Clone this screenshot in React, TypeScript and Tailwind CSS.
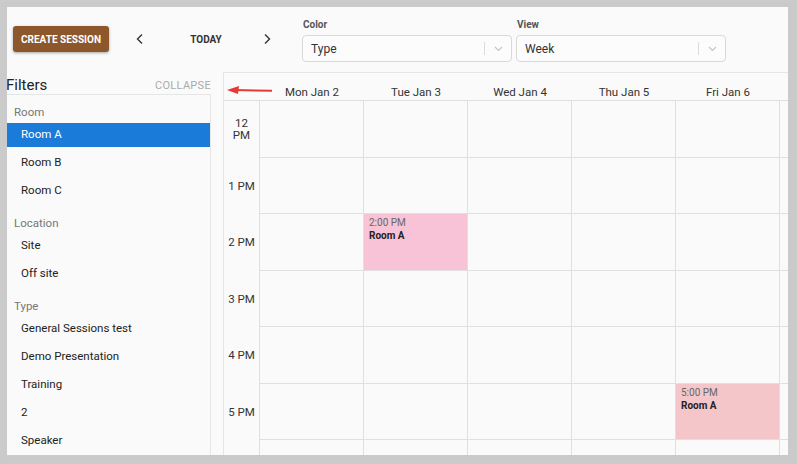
import React from "react";

const font = { fontFamily: "Roboto, 'Liberation Sans', Arial, sans-serif" };

function Chevron({ dir }: { dir: "left" | "right" }) {
  return (
    <svg width="10" height="12" viewBox="0 0 10 12" fill="none">
      {dir === "left" ? (
        <path d="M7 1.5 L2.5 6 L7 10.5" stroke="#333" strokeWidth="1.4" />
      ) : (
        <path d="M3 1.5 L7.5 6 L3 10.5" stroke="#333" strokeWidth="1.4" />
      )}
    </svg>
  );
}

function Select({ label, value }: { label: string; value: string }) {
  return (
    <div className="flex flex-col w-[210px]">
      <div className="text-[10px] font-bold text-[#555] h-[14px] leading-[14px] pl-[1px]">{label}</div>
      <div className="mt-[3px] h-[27px] border border-[#d9d9d9] rounded-[4px] bg-[#fcfcfc] flex items-center">
        <div className="flex-1 pl-[8px] text-[12px] text-[#333]">{value}</div>
        <div className="w-px h-[13px] bg-[#dcdcdc]" />
        <div className="w-[26px] flex justify-center">
          <svg width="9" height="6" viewBox="0 0 9 6" fill="none">
            <path d="M1 1 L4.5 4.5 L8 1" stroke="#c4c4c4" strokeWidth="1.1" />
          </svg>
        </div>
      </div>
    </div>
  );
}

const sections = [
  { title: "Room", items: ["Room A", "Room B", "Room C"] },
  { title: "Location", items: ["Site", "Off site"] },
  { title: "Type", items: ["General Sessions test", "Demo Presentation", "Training", "2", "Speaker"] },
];

const days = ["Mon Jan 2", "Tue Jan 3", "Wed Jan 4", "Thu Jan 5", "Fri Jan 6"];
const hours = ["12\nPM", "1 PM", "2 PM", "3 PM", "4 PM", "5 PM"];

function Cell({ day, hour }: { day: number; hour: number }) {
  let ev: null | { time: string; bg: string } = null;
  if (day === 1 && hour === 2) ev = { time: "2:00 PM", bg: "bg-[#f8c3d6]" };
  if (day === 4 && hour === 5) ev = { time: "5:00 PM", bg: "bg-[#f4c6c9]" };
  return (
    <div className="h-[56.5px] border-r border-b border-[#e0e0e0] relative">
      {ev && (
        <div className={`absolute inset-0 ${ev.bg} px-[5px] pt-[3px]`}>
          <div className="text-[10px] leading-[12px] text-[#666]">{ev.time}</div>
          <div className="text-[10px] leading-[13px] font-bold text-[#222]">Room A</div>
        </div>
      )}
    </div>
  );
}

export default function App() {
  return (
    <div style={font} className="w-[797px] h-[464px] bg-[#cbcbcb] p-[2px]">
      <div className="w-full h-full border-[5px] border-r-[7px] border-b-[7px] border-[#cacaca] bg-[#fafafa] flex flex-col overflow-hidden relative">
        {/* top bar */}
        <div className="h-[65px] flex items-start shrink-0">
          <div className="ml-[6px] mt-[19px] w-[96px] h-[26px] bg-[#8c572b] rounded-[3px] shadow-[0_1px_3px_rgba(0,0,0,0.35)] flex items-center justify-center text-white text-[10px] font-bold">
            CREATE SESSION
          </div>
          <div className="mt-[19px] h-[26px] ml-[26px] flex items-center">
            <Chevron dir="left" />
          </div>
          <div className="mt-[19px] h-[26px] w-[110px] ml-[6px] flex items-center justify-center text-[10px] font-bold text-[#333]">
            TODAY
          </div>
          <div className="mt-[19px] h-[26px] ml-[1px] flex items-center">
            <Chevron dir="right" />
          </div>
          <div className="ml-[30px] mt-[11px] flex gap-[4px]">
            <Select label="Color" value="Type" />
            <Select label="View" value="Week" />
          </div>
        </div>

        {/* body */}
        <div className="flex flex-1 min-h-0">
          {/* sidebar */}
          <div className="w-[204px] shrink-0 flex flex-col">
            <div className="h-[23px] flex items-end justify-between border-b border-[#e6e6e6]">
              <div className="text-[15px] text-[#222] -ml-[1px] leading-[18px]">Filters</div>
              <div className="text-[11px] text-[#aaa] tracking-[0.3px] leading-[16px]">COLLAPSE</div>
            </div>
            <div className="flex-1 border-r border-[#e6e6e6] pt-[10px]">
              {sections.map((s, si) => (
                <div key={s.title} className={si > 0 ? "mt-[13px]" : ""}>
                  <div className="h-[16px] flex items-center pl-[7px] text-[11.5px] text-[#777]">{s.title}</div>
                  <div className="mt-[2px] flex flex-col gap-[4px]">
                    {s.items.map((it) => {
                      const sel = it === "Room A";
                      return (
                        <div
                          key={it}
                          className={`h-[24px] flex items-center pl-[14px] text-[11.5px] ${sel ? "bg-[#1a7bd9] text-white" : "text-[#222]"}`}
                        >
                          {it}
                        </div>
                      );
                    })}
                  </div>
                </div>
              ))}
            </div>
          </div>

          {/* calendar */}
          <div className="ml-[12px] flex-1 border-l border-t border-[#e6e6e6] flex flex-col overflow-hidden">
            <div className="h-[28px] flex border-b border-[#e0e0e0] shrink-0">
              <div className="w-[36px] shrink-0" />
              {days.map((d) => (
                <div key={d} className="w-[104px] shrink-0 flex items-end justify-center pb-[0px] text-[11.5px] leading-[16px] text-[#333]">
                  {d}
                </div>
              ))}
            </div>
            <div className="flex">
              <div className="w-[36px] shrink-0 border-r border-[#e0e0e0]">
                {hours.map((h) => (
                  <div key={h} className="h-[56.5px] flex items-center justify-center text-center text-[11.5px] leading-[12px] text-[#333] whitespace-pre-line">
                    {h}
                  </div>
                ))}
              </div>
              {[0, 1, 2, 3, 4, 5].map((d) => (
                <div key={d} className="w-[104px] shrink-0 flex flex-col">
                  {hours.map((_, hi) => (
                    <Cell key={hi} day={d} hour={hi} />
                  ))}
                  <div className="h-[20px] border-r border-[#e0e0e0]" />
                </div>
              ))}
            </div>
          </div>
        </div>

        {/* annotation arrow */}
        <svg className="absolute left-[219px] top-[77px]" width="50" height="12" viewBox="0 0 50 12">
          <line x1="8" y1="6" x2="46" y2="6.8" stroke="#e53935" strokeWidth="2" />
          <path d="M1 6 L13 2 L12 10 Z" fill="#e53935" />
        </svg>
      </div>
    </div>
  );
}
